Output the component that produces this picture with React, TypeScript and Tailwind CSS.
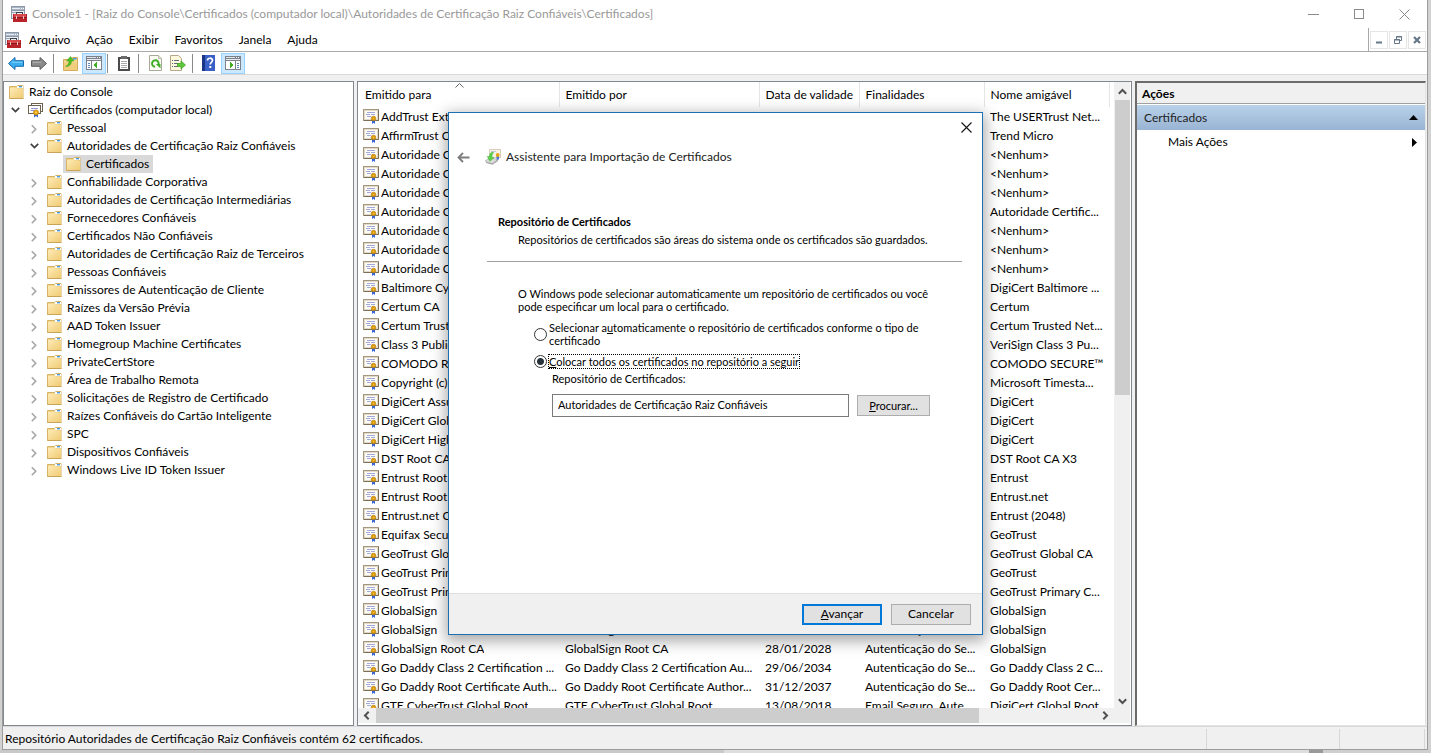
import React from "react";

type CertRow = { to: string; by?: string; date?: string; use?: string; name: string };

const TREE = [
  "Confiabilidade Corporativa",
  "Autoridades de Certificação Intermediárias",
  "Fornecedores Confiáveis",
  "Certificados Não Confiáveis",
  "Autoridades de Certificação Raiz de Terceiros",
  "Pessoas Confiáveis",
  "Emissores de Autenticação de Cliente",
  "Raízes da Versão Prévia",
  "AAD Token Issuer",
  "Homegroup Machine Certificates",
  "PrivateCertStore",
  "Área de Trabalho Remota",
  "Solicitações de Registro de Certificado",
  "Raízes Confiáveis do Cartão Inteligente",
  "SPC",
  "Dispositivos Confiáveis",
  "Windows Live ID Token Issuer",
];

const ROWS: CertRow[] = [
  { to: "AddTrust External CA Root", name: "The USERTrust Net..." },
  { to: "AffirmTrust Commercial", name: "Trend Micro" },
  { to: "Autoridade Certificadora", name: "<Nenhum>" },
  { to: "Autoridade Certificadora", name: "<Nenhum>" },
  { to: "Autoridade Certificadora", name: "<Nenhum>" },
  { to: "Autoridade Certificadora", name: "Autoridade Certific..." },
  { to: "Autoridade Certificadora", name: "<Nenhum>" },
  { to: "Autoridade Certificadora", name: "<Nenhum>" },
  { to: "Autoridade Certificadora", name: "<Nenhum>" },
  { to: "Baltimore CyberTrust Root", name: "DigiCert Baltimore ..." },
  { to: "Certum CA", name: "Certum" },
  { to: "Certum Trusted Network", name: "Certum Trusted Net..." },
  { to: "Class 3 Public Primary", name: "VeriSign Class 3 Pu..." },
  { to: "COMODO RSA Certification", name: "COMODO SECURE™" },
  { to: "Copyright (c) 1997", name: "Microsoft Timesta..." },
  { to: "DigiCert Assured ID Root", name: "DigiCert" },
  { to: "DigiCert Global Root CA", name: "DigiCert" },
  { to: "DigiCert High Assurance", name: "DigiCert" },
  { to: "DST Root CA X3", name: "DST Root CA X3" },
  { to: "Entrust Root Certification", name: "Entrust" },
  { to: "Entrust Root Certification", name: "Entrust.net" },
  { to: "Entrust.net Certification", name: "Entrust (2048)" },
  { to: "Equifax Secure Certificate", name: "GeoTrust" },
  { to: "GeoTrust Global CA", name: "GeoTrust Global CA" },
  { to: "GeoTrust Primary", name: "GeoTrust" },
  { to: "GeoTrust Primary", name: "GeoTrust Primary C..." },
  { to: "GlobalSign", name: "GlobalSign" },
  { to: "GlobalSign", by: "GlobalSign", use: "Autenticação do Se...", name: "GlobalSign" },
  { to: "GlobalSign Root CA", by: "GlobalSign Root CA", date: "28/01/2028", use: "Autenticação do Se...", name: "GlobalSign" },
  { to: "Go Daddy Class 2 Certification ...", by: "Go Daddy Class 2 Certification Au...", date: "29/06/2034", use: "Autenticação do Se...", name: "Go Daddy Class 2 C..." },
  { to: "Go Daddy Root Certificate Auth...", by: "Go Daddy Root Certificate Author...", date: "31/12/2037", use: "Autenticação do Se...", name: "Go Daddy Root Cer..." },
  { to: "GTE CyberTrust Global Root", by: "GTE CyberTrust Global Root", date: "13/08/2018", use: "Email Seguro, Aute...", name: "DigiCert Global Root" },
];

function ConsoleIcon() {
  return (
    <svg width="16" height="16" viewBox="0 0 16 16" shapeRendering="crispEdges" aria-hidden="true">
      <rect x="0" y="0" width="14" height="13" fill="#8d98a8" />
      <rect x="1" y="1" width="12" height="3" fill="#a9b4c4" />
      <rect x="1" y="2" width="8" height="1" fill="#e8edf3" />
      <rect x="10" y="2" width="1" height="1" fill="#fff" />
      <rect x="12" y="2" width="1" height="1" fill="#fff" />
      <rect x="1" y="5" width="12" height="7" fill="#e9edf2" />
      <rect x="1" y="6" width="4" height="1" fill="#9aa6b8" />
      <rect x="6" y="6" width="6" height="1" fill="#b8c1ce" />
      <path d="M5 8V6h7v2h-1V7H6v1z" fill="#3d4148" />
      <rect x="2" y="8" width="14" height="8" fill="#b8232a" />
      <rect x="3" y="8" width="12" height="3" fill="#d94a4e" />
      <rect x="2" y="11" width="14" height="1" fill="#8c1a1e" />
      <rect x="5" y="10" width="1" height="3" fill="#e8c4c4" />
      <rect x="12" y="10" width="1" height="3" fill="#e8c4c4" />
    </svg>
  );
}

function FolderIcon() {
  return (
    <svg width="15" height="14" viewBox="0 0 15 14" className="shrink-0" aria-hidden="true">
      <defs>
        <linearGradient id="folder" x1="0" y1="0" x2="1" y2="1">
          <stop offset="0" stopColor="#fdebb6" />
          <stop offset="1" stopColor="#f0cb74" />
        </linearGradient>
      </defs>
      <path d="M.5 1.500h7l1.500-1h5v13H.5z" fill="#f3d58c" stroke="#d6b265" />
      <rect x="8" y="1" width="6" height="2" fill="#fff" />
      <rect x="10" y="1" width="3" height="1.400" fill="#4a9be0" />
      <path d="M1 3h6.500L9 4h5v9H1z" fill="url(#folder)" />
      <path d="M.5 13.500h14" stroke="#c9a557" />
    </svg>
  );
}

function CertIcon() {
  return (
    <svg width="16" height="15" viewBox="0 0 16 15" className="shrink-0" aria-hidden="true">
      <rect x=".5" y=".5" width="15" height="11" fill="#fff" stroke="#a4977d" />
      <path d="M15.500 1v10.500H1" fill="none" stroke="#7c6f58" />
      <rect x="1.500" y="1.500" width="13" height="9" fill="#fdfbf6" stroke="#e2dac8" />
      <path d="M4 3.500h8M3 5.500h4M8 5.500h4M4 7.500h4" stroke="#a3aadb" />
      <path d="M9 11v4l1.500-1.200L12 15v-4z" fill="#3565d8" />
      <circle cx="10.500" cy="9.500" r="2.300" fill="#d99a0b" stroke="#b87b05" strokeWidth=".6" />
      <circle cx="10.500" cy="9.500" r=".8" fill="#f6c141" />
    </svg>
  );
}

function CertStoreIcon() {
  return (
    <svg width="16" height="16" viewBox="0 0 16 16" className="shrink-0" aria-hidden="true">
      <rect x="3.500" y="1.500" width="11" height="8" fill="#fff" stroke="#6e6350" />
      <rect x=".5" y="3.500" width="12" height="8" fill="#fff" stroke="#6e6350" />
      <path d="M3 6.500h7M2.500 8.500h4" stroke="#8f98d6" />
      <path d="M6 11v4.500l2-1.500 2 1.500V11z" fill="#3565d8" />
      <circle cx="8" cy="10.500" r="2.600" fill="#e7a413" stroke="#b87b05" strokeWidth=".6" />
      <circle cx="8" cy="10.500" r="1" fill="#ffd75e" />
    </svg>
  );
}

function NavArrow({ forward }: { forward?: boolean }) {
  return (
    <svg width="16" height="15" viewBox="0 0 16 15" aria-hidden="true">
      {forward ? (
        <path d="M15.500 7.500 9 1.500v3.200H.5v5.600H9v3.200z" fill="#8b8b8b" stroke="#5c5c5c" strokeLinejoin="round" />
      ) : (
        <path d="M.5 7.500 7 1.500v3.200h8.500v5.600H7v3.200z" fill="#39aef0" stroke="#1769ad" strokeLinejoin="round" />
      )}
      {forward ? <path d="M1.500 6.200h8.500" stroke="#b9b9b9" /> : <path d="M3.500 6.200h11" stroke="#8ad6fb" />}
    </svg>
  );
}

function FolderUpIcon() {
  return (
    <svg width="15" height="16" viewBox="0 0 15 16" aria-hidden="true">
      <path d="M.5 4.500h8l1-2h5v13H.5z" fill="#f5d68c" stroke="#d3ad5a" />
      <rect x="10" y="3" width="3.500" height="1.500" fill="#4a9be0" />
      <path d="M1 8h13v7H1z" fill="#f1cd7c" />
      <path d="M2.500 11.500C5 10.500 6 8.500 6 6H3.500L7.500 1.500 11 6H8.500c0 3-1.800 5.500-6 5.500z" fill="#4fc01f" stroke="#3c9e1c" strokeWidth=".5" />
    </svg>
  );
}

function PaneIcon({ right }: { right?: boolean }) {
  return (
    <svg width="16" height="14" viewBox="0 0 16 14" shapeRendering="crispEdges" aria-hidden="true">
      <rect width="16" height="14" fill="#7b828c" />
      <rect x="1" y="1" width="9" height="1" fill="#dfe4ea" />
      <rect x="11" y="1" width="1" height="1" fill="#fff" />
      <rect x="13" y="1" width="1" height="1" fill="#fff" />
      <rect x="1" y="3" width="14" height="1" fill="#e8ebef" />
      <rect x="1" y="5" width="14" height="8" fill="#fff" />
      {right ? (
        <>
          <rect x="10" y="5" width="1" height="8" fill="#7b828c" />
          <path d="M12 7.500h2M12 9.500h2M12 11.500h2" stroke="#5e87b8" />
          <path d="M5 6l4 3-4 3z" fill="#41ad1f" />
        </>
      ) : (
        <>
          <rect x="5" y="5" width="1" height="8" fill="#7b828c" />
          <path d="M2 7.500h2M2 9.500h2M2 11.500h2" stroke="#5e87b8" />
          <path d="M11 6L7 9l4 3z" fill="#41ad1f" />
        </>
      )}
    </svg>
  );
}

function ClipboardIcon() {
  return (
    <svg width="12" height="15" viewBox="0 0 12 15" shapeRendering="crispEdges" aria-hidden="true">
      <rect x="0" y="1" width="12" height="14" fill="#4b4b4b" />
      <rect x="2" y="3" width="8" height="10" fill="#fff" />
      <rect x="3" y="0" width="6" height="3" fill="#6b6b6b" />
      <path d="M3 5h6v1H3zM3 7h6v1H3zM3 9h6v1H3zM3 11h6v1H3z" fill="#a9a9a9" />
    </svg>
  );
}

function RefreshIcon() {
  return (
    <svg width="13" height="16" viewBox="0 0 13 16" aria-hidden="true">
      <path d="M.5.5h9l3 3v12H.5z" fill="#fbfbf4" stroke="#a9a99a" />
      <path d="M9.500.5v3h3" fill="#e8e8dc" stroke="#a9a99a" strokeWidth=".7" />
      <path d="M6 11.800A3.300 3.300 0 1 1 9.500 9.500" fill="none" stroke="#3fae26" strokeWidth="2" />
      <path d="M6.800 9h4.700v4.500z" fill="#3fae26" />
    </svg>
  );
}

function ExportIcon() {
  return (
    <svg width="16" height="16" viewBox="0 0 16 16" aria-hidden="true">
      <path d="M.5.5h8l3 3v12H.5z" fill="#fdf8dc" stroke="#b5a98a" />
      <path d="M2 5.500h1M4 5.500h5M2 8.500h1M4 8.500h4M2 11.500h1M4 11.500h4" stroke="#5f6878" />
      <path d="M7.500 8.500H11V6l4.500 4-4.500 4v-2.500H7.500z" fill="#5ec93c" stroke="#3a9a1d" strokeWidth=".7" />
    </svg>
  );
}

function HelpIcon() {
  return (
    <svg width="13" height="16" viewBox="0 0 13 16" aria-hidden="true">
      <rect width="13" height="16" fill="#3a5fc6" />
      <rect width="3" height="16" fill="#1a3488" />
      <path d="M5.500 5.500c0-3 5-3 5-.2 0 2-2.300 2-2.300 4.200" fill="none" stroke="#fff" strokeWidth="1.700" />
      <rect x="7.300" y="11" width="2" height="2" fill="#fff" />
    </svg>
  );
}

function WizardIcon() {
  return (
    <svg width="16" height="16" viewBox="0 0 16 16" aria-hidden="true">
      <rect x="4.500" y=".5" width="11" height="8" fill="#f7f2e6" stroke="#d9cfb8" />
      <path d="M6 2.500h5" stroke="#c2c8de" />
      <path d="M.5 11.500 6 9l7 1.500-5.500 4L1 13z" fill="#dcdcdc" stroke="#a9a9a9" strokeWidth=".7" />
      <path d="M1 13l6.500 1.500 5.500-4v1.500L7.500 15.700 1 14z" fill="#a4a4a4" />
      <path d="M8 3C5.500 3.500 4.500 5 4.200 7.500H2.200l2.600 4.700L9 8.800l-2-.6C7 6 7.300 4.800 8.500 4z" fill="#5bd04c" stroke="#3ca531" strokeWidth=".4" />
      <path d="M11.500 7v3.500h2.500V7z" fill="#4775d8" />
      <circle cx="12.700" cy="6" r="1.900" fill="#e6a21a" />
    </svg>
  );
}

function Chevron({ open }: { open?: boolean }) {
  return (
    <button type="button" aria-label={open ? "Recolher" : "Expandir"} className="mr-[7px] flex h-4 w-3 shrink-0 items-center justify-center">
      {open ? (
        <svg width="9" height="6" viewBox="0 0 9 6" aria-hidden="true">
          <path d="M.8.8l3.700 3.700L8.200.8" fill="none" stroke="#404040" strokeWidth="1.700" />
        </svg>
      ) : (
        <svg width="6" height="11" viewBox="0 0 6 11" aria-hidden="true">
          <path d="M.8 2.300l3.900 4-3.900 4" fill="none" stroke="#a6a6a6" strokeWidth="1.600" />
        </svg>
      )}
    </button>
  );
}

function ScrollArrow({ dir, label }: { dir: "up" | "down" | "left" | "right"; label: string }) {
  const d = {
    up: "M.8 5.700 4.500 2l3.700 3.700",
    down: "M.8 3.300 4.500 7l3.700-3.700",
    left: "M5.700.8 2 4.500l3.700 3.700",
    right: "M3.300.8 7 4.500 3.300 8.200",
  }[dir];
  return (
    <button type="button" aria-label={label} className="flex size-4 shrink-0 items-center justify-center">
      <svg width="9" height="9" viewBox="0 0 9 9" aria-hidden="true">
        <path d={d} fill="none" stroke="#505050" strokeWidth="2" />
      </svg>
    </button>
  );
}

const Sep = () => <span className="h-[19px] w-px bg-[#8a8a8a]" />;

function Wizard() {
  return (
    <section
      role="dialog"
      aria-label="Assistente para Importação de Certificados"
      className="absolute top-[112px] left-[448px] flex h-[523px] w-[535px] flex-col border border-[#1a6fb5] bg-white shadow-[0_4px_14px_2px_rgba(0,0,0,0.35)]"
    >
      <div className="flex h-7 items-center justify-end pr-[10px]">
        <button type="button" aria-label="Fechar assistente" className="flex size-[11px] items-center justify-center">
          <svg width="11" height="11" viewBox="0 0 11 11" aria-hidden="true">
            <path d="M.5.5l10 10M10.500.5l-10 10" stroke="#111" strokeWidth="1.100" />
          </svg>
        </button>
      </div>
      <div className="flex h-8 items-center pl-2 text-[12px] text-[#222]">
        <button type="button" aria-label="Voltar" className="mr-[15px] flex h-4 w-[13px] items-center">
          <svg width="13" height="11" viewBox="0 0 13 11" aria-hidden="true">
            <path d="M12.500 5.500H1.500M6 1 1.500 5.500 6 10" fill="none" stroke="#7d7d7d" strokeWidth="1.800" />
          </svg>
        </button>
        <WizardIcon />
        <h1 className="ml-[5px]">Assistente para Importação de Certificados</h1>
      </div>
      <div className="flex grow flex-col pt-[42px] pr-5 pl-[38px] text-[11px] leading-[13px]">
        <div className="border-b border-[#a0a0a0] pb-[15px] pl-[11px]">
          <h2 className="font-bold">Repositório de Certificados</h2>
          <p className="mt-[5px] pl-5">Repositórios de certificados são áreas do sistema onde os certificados são guardados.</p>
        </div>
        <div className="flex flex-col pt-[25px] pl-[31px]">
          <p className="w-[412px]">
            O Windows pode selecionar automaticamente um repositório de certificados ou você pode especificar um local para o certificado.
          </p>
          <label className="mt-2 ml-4 flex w-[396px] items-center gap-[2px]">
            <input type="radio" name="store" className="size-[13px] shrink-0 appearance-none rounded-full border border-[#333] bg-white" />
            <span>
              Selecionar a<u>u</u>tomaticamente o repositório de certificados conforme o tipo de certificado
            </span>
          </label>
          <label className="mt-2 ml-4 flex items-center gap-[2px]">
            <input
              type="radio"
              name="store"
              defaultChecked
              className="size-[13px] shrink-0 appearance-none rounded-full border border-[#333] bg-white checked:bg-[radial-gradient(circle,#26323c_3px,transparent_4px)]"
            />
            <span className="outline-1 outline-black outline-dotted">
              <u>C</u>olocar todos os certificados no repositório a seguir
            </span>
          </label>
          <label htmlFor="store-name" className="mt-1 ml-[34px]">
            Repositório de Certificados:
          </label>
          <div className="mt-[9px] ml-[34px] flex items-center gap-2">
            <input
              id="store-name"
              type="text"
              readOnly
              defaultValue="Autoridades de Certificação Raiz Confiáveis"
              className="h-[23px] w-[297px] border border-[#7a7a7a] px-[5px] pb-[3px] outline-none"
            />
            <button type="button" className="h-[21px] w-[73px] border border-[#adadad] bg-[#e1e1e1]">
              <u>P</u>rocurar...
            </button>
          </div>
        </div>
      </div>
      <div className="flex h-[41px] items-center justify-end gap-[9px] border-t border-[#dfdfdf] bg-[#f0f0f0] pr-[11px] text-[12px]">
        <button type="button" className="h-[21px] w-20 border-2 border-[#0078d7] bg-[#e1e1e1] leading-4">
          <u>A</u>vançar
        </button>
        <button type="button" className="h-[21px] w-20 border border-[#adadad] bg-[#e1e1e1] leading-4">
          Cancelar
        </button>
      </div>
    </section>
  );
}

export default function App() {
  const cell = "h-[19px] truncate p-0 pl-[6px] leading-[18px]";
  const head = "h-[25px] border-r border-[#e5e5e5] p-0 text-left font-normal whitespace-nowrap";
  return (
    <div className="relative flex h-screen flex-col overflow-hidden bg-[#d2d2d2] font-['Lato','Open_Sans',sans-serif] text-[12px] leading-4 text-black">
      <main className="mr-[3px] ml-[2px] flex min-h-0 grow flex-col border-r border-b border-l border-[#9c9c9c] bg-[#f0f0f0]">
        <header className="flex h-7 shrink-0 items-center bg-white pl-2 text-[#999]">
          <ConsoleIcon />
          <span className="ml-[5px] grow">Console1 - [Raiz do Console\Certificados (computador local)\Autoridades de Certificação Raiz Confiáveis\Certificados]</span>
          <div className="flex w-[119px] items-center justify-between pr-[17px]">
            <button type="button" aria-label="Minimizar">
              <svg width="11" height="11" viewBox="0 0 11 11" aria-hidden="true"><path d="M0 5.500h11" stroke="#8a8a8a" /></svg>
            </button>
            <button type="button" aria-label="Maximizar">
              <svg width="11" height="11" viewBox="0 0 11 11" aria-hidden="true"><rect x=".5" y=".5" width="9" height="9" fill="none" stroke="#8a8a8a" /></svg>
            </button>
            <button type="button" aria-label="Fechar">
              <svg width="11" height="11" viewBox="0 0 11 11" aria-hidden="true"><path d="M.5.5l10 10M10.500.5l-10 10" stroke="#8a8a8a" /></svg>
            </button>
          </div>
        </header>

        <nav className="flex h-6 shrink-0 items-center border-b border-[#a9a9a9] bg-white pl-[2px]" aria-label="Menu">
          <ConsoleIcon />
          <div className="ml-2 flex grow gap-4">
            {["Arquivo", "Ação", "Exibir", "Favoritos", "Janela", "Ajuda"].map((m) => (
              <button key={m} type="button">{m}</button>
            ))}
          </div>
          <div className="flex h-full items-center gap-[1px] border-l border-[#a9a9a9] pr-px pl-px">
            <button type="button" aria-label="Minimizar janela" className="flex size-[18px] items-center justify-center border border-[#e5e5e5]">
              <svg width="8" height="8" viewBox="0 0 8 8" aria-hidden="true"><path d="M1 6.500h6" stroke="#667788" strokeWidth="2" /></svg>
            </button>
            <button type="button" aria-label="Restaurar janela" className="flex size-[18px] items-center justify-center border border-[#e5e5e5]">
              <svg width="8" height="8" viewBox="0 0 8 8" aria-hidden="true">
                <path d="M2.500 3V.500h5v4H5.500M2 1h6" fill="none" stroke="#667788" />
                <path d="M.5 3.500h5v4h-5zM0 4h6" fill="none" stroke="#667788" />
              </svg>
            </button>
            <button type="button" aria-label="Fechar janela" className="flex size-[18px] items-center justify-center border border-[#e5e5e5]">
              <svg width="8" height="8" viewBox="0 0 8 8" aria-hidden="true"><path d="M1 1l6 6M7 1L1 7" stroke="#667788" strokeWidth="2.200" /></svg>
            </button>
          </div>
        </nav>

        <div className="flex h-[23px] shrink-0 items-center border-b border-[#d8d8d8] bg-white pl-[5px]" role="toolbar" aria-label="Ferramentas">
          <div className="flex w-[45px] items-center gap-[7px]">
            <button type="button" aria-label="Voltar"><NavArrow /></button>
            <button type="button" aria-label="Avançar"><NavArrow forward /></button>
          </div>
          <Sep />
          <button type="button" aria-label="Um nível acima" className="ml-[9px]"><FolderUpIcon /></button>
          <button type="button" aria-label="Árvore de console" className="mr-px ml-1 flex h-[21px] w-6 items-center justify-center border border-[#99d1ff] bg-[#cce8ff]"><PaneIcon /></button>
          <Sep />
          <button type="button" aria-label="Propriedades" className="mr-2 ml-[10px]"><ClipboardIcon /></button>
          <Sep />
          <button type="button" aria-label="Atualizar" className="ml-[10px]"><RefreshIcon /></button>
          <button type="button" aria-label="Exportar lista" className="mr-[6px] ml-2"><ExportIcon /></button>
          <Sep />
          <button type="button" aria-label="Ajuda" className="ml-[9px]"><HelpIcon /></button>
          <button type="button" aria-label="Painel de ações" className="ml-[6px] flex h-[21px] w-6 items-center justify-center border border-[#99d1ff] bg-[#cce8ff]"><PaneIcon right /></button>
        </div>

        <div className="mt-[6px] flex min-h-0 grow">
          <section className="w-[351px] shrink-0 overflow-hidden border border-[#828790] bg-white pt-px pl-[5px]" aria-label="Árvore">
            <ul className="[&_li]:flex [&_li]:h-[18px] [&_li]:items-center">
              <li><FolderIcon /><span className="ml-[5px]">Raiz do Console</span></li>
              <li><Chevron open /><CertStoreIcon /><span className="ml-[5px]">Certificados (computador local)</span></li>
              <li className="pl-[19px]"><Chevron /><FolderIcon /><span className="ml-[5px]">Pessoal</span></li>
              <li className="pl-[19px]"><Chevron open /><FolderIcon /><span className="ml-[5px]">Autoridades de Certificação Raiz Confiáveis</span></li>
              <li className="pl-[54px]">
                <span className="flex h-[18px] items-center bg-[#d9d9d9] pr-1 pl-[3px]"><FolderIcon /><span className="ml-[5px]">Certificados</span></span>
              </li>
              {TREE.map((t) => (
                <li key={t} className="pl-[19px]"><Chevron /><FolderIcon /><span className="ml-[5px]">{t}</span></li>
              ))}
            </ul>
          </section>

          <section className="ml-[3px] flex min-w-0 grow flex-col border border-[#828790] bg-white pr-px pb-[2px]" aria-label="Certificados">
            <div className="flex min-h-0 grow">
              <div className="min-w-0 grow overflow-hidden">
                <table className="w-[751px] table-fixed border-collapse">
                  <colgroup>
                    <col className="w-[201px]" />
                    <col className="w-[200px]" />
                    <col className="w-[100px]" />
                    <col className="w-[125px]" />
                    <col className="w-[125px]" />
                  </colgroup>
                  <thead>
                    <tr>
                      <th className={head + " relative pl-[7px]"}>
                        Emitido para
                        <svg width="9" height="5" viewBox="0 0 9 5" className="absolute top-[1px] left-[97px]" aria-hidden="true">
                          <path d="M.5 4.500l4-4 4 4" fill="none" stroke="#666" />
                        </svg>
                      </th>
                      <th className={head + " pl-[6px]"}>Emitido por</th>
                      <th className={head + " pl-[6px]"}>Data de validade</th>
                      <th className={head + " pl-[6px]"}>Finalidades</th>
                      <th className={head + " pl-[6px]"}>Nome amigável</th>
                    </tr>
                  </thead>
                  <tbody>
                    {ROWS.map((r, i) => (
                      <tr key={i}>
                        <td className="h-[19px] p-0 pl-[5px]">
                          <div className="flex h-[19px] items-center gap-[2px]">
                            <CertIcon />
                            <span className="truncate leading-[18px]">{r.to}</span>
                          </div>
                        </td>
                        <td className={cell}>{r.by}</td>
                        <td className={cell}>{r.date}</td>
                        <td className={cell}>{r.use}</td>
                        <td className={cell}>{r.name}</td>
                      </tr>
                    ))}
                  </tbody>
                </table>
              </div>
              <div className="flex w-4 shrink-0 flex-col items-center bg-[#f0f0f0] pt-[2px]">
                <ScrollArrow dir="up" label="Rolar para cima" />
                <div className="h-[295px] w-[15px] bg-[#cdcdcd]" />
                <div className="grow" />
                <ScrollArrow dir="down" label="Rolar para baixo" />
              </div>
            </div>
            <div className="flex h-[15px] shrink-0 items-center bg-[#f0f0f0] pl-px">
              <ScrollArrow dir="left" label="Rolar para a esquerda" />
              <div className="ml-px h-[15px] w-[603px] bg-[#cdcdcd]" />
              <div className="grow" />
              <ScrollArrow dir="right" label="Rolar para a direita" />
              <div className="w-[18px]" />
            </div>
          </section>

          <aside className="mr-px ml-[3px] w-[291px] shrink-0 border-t-2 border-r border-b border-l-2 border-t-[#6b6b6b] border-r-[#e3e3e3] border-b-[#e3e3e3] border-l-[#6b6b6b] bg-white" aria-label="Ações">
            <h2 className="h-[21px] border-b border-[#a0a0a0] bg-[#f0f0f0] pl-[5px] leading-[21px] font-bold">Ações</h2>
            <button type="button" className="mt-px flex h-[25px] w-full items-center justify-between bg-linear-to-b from-[#b9d1ea] to-[#99b4d3] pr-[7px] pl-[7px] text-[#1e1e1e]">
              Certificados
              <svg width="9" height="5" viewBox="0 0 9 5" aria-hidden="true"><path d="M4.500 0L9 5H0z" fill="#000" /></svg>
            </button>
            <button type="button" className="flex h-6 w-full items-center justify-between pr-[8px] pl-[31px]">
              Mais Ações
              <svg width="5" height="9" viewBox="0 0 5 9" aria-hidden="true"><path d="M0 0l5 4.500L0 9z" fill="#000" /></svg>
            </button>
          </aside>
        </div>

        <footer className="flex h-[23px] shrink-0 items-center border-t border-[#d7d7d7] pt-[2px] pl-[2px]">
          <span className="grow">Repositório Autoridades de Certificação Raiz Confiáveis contém 62 certificados.</span>
          <span className="h-5 w-[133px] border-l border-[#d7d7d7]" />
          <span className="mr-[2px] h-5 w-[86px] border-r border-l border-[#d7d7d7]" />
        </footer>
      </main>
      <div className="flex h-[3px] shrink-0 bg-[#c9c9c9]">
        <div className="w-[724px]" />
        <div className="grow bg-[#dedede]" />
        <div className="w-[14px] bg-[#999]" />
        <div className="w-[108px] bg-[#cfcfcf]" />
      </div>
      <Wizard />
    </div>
  );
}
